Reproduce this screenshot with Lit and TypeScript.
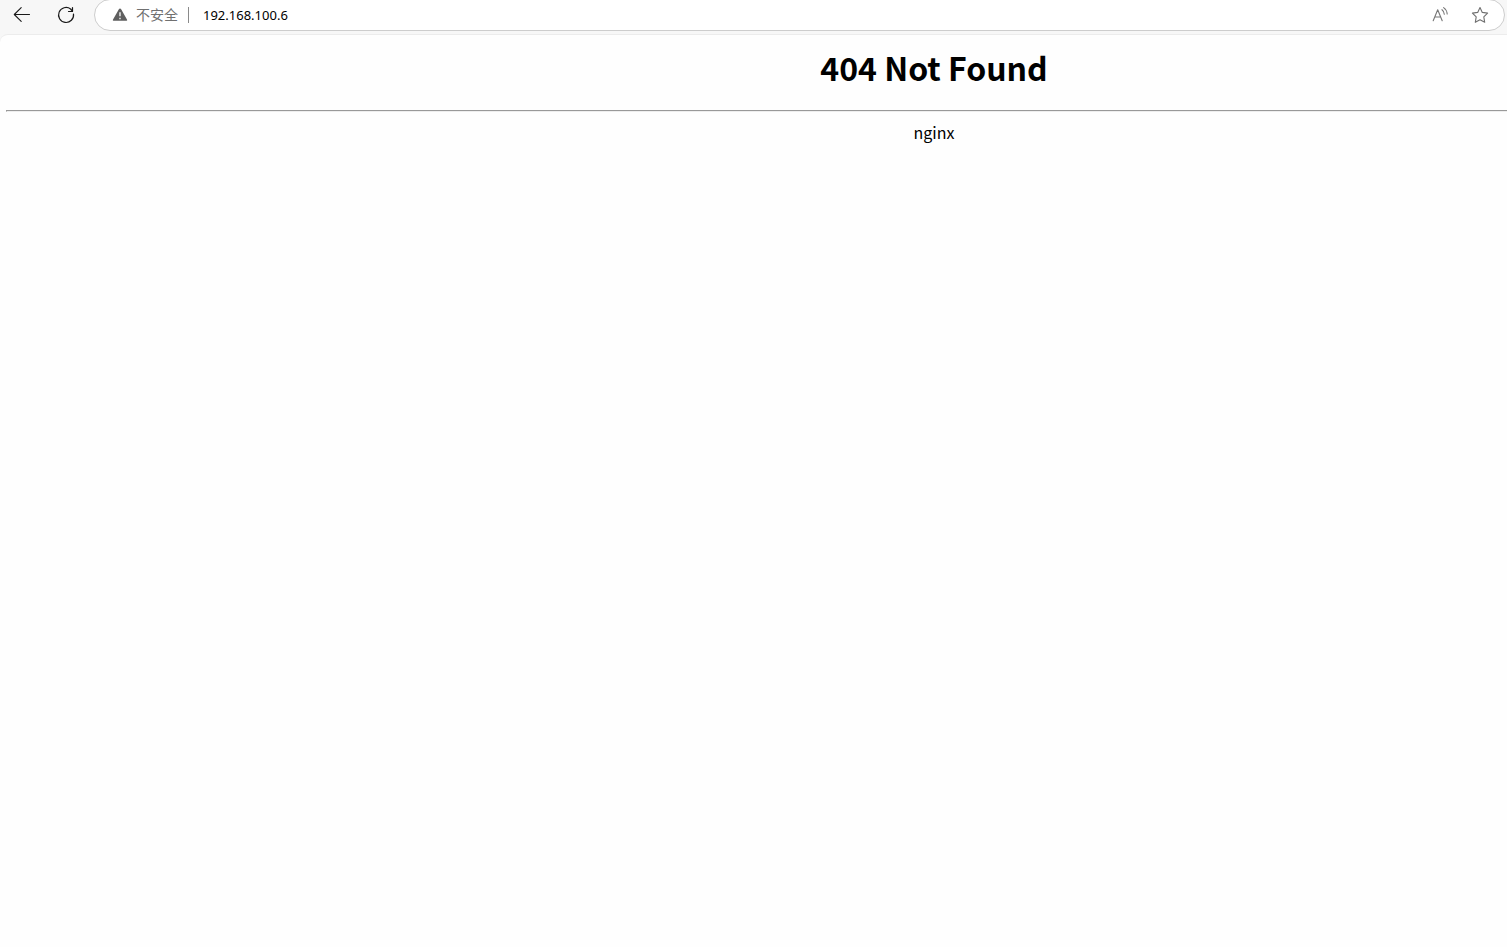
import { LitElement, html, css } from "lit";
import { customElement, property } from "lit/decorators.js";

@customElement("address-bar")
class AddressBar extends LitElement {
  @property() url = "";

  static styles = css`
    :host {
      flex: 1;
      min-width: 0;
    }
    .bar {
      display: flex;
      align-items: center;
      box-sizing: border-box;
      height: 32px;
      padding: 0 15px 0 17px;
      border: 1px solid #cdcdcd;
      border-radius: 16px;
      background: #ffffff;
      color: #666666;
    }
    button {
      display: flex;
      align-items: center;
      margin: 0;
      padding: 0;
      border: 0;
      background: none;
      color: inherit;
      font: 14px/20px "Noto Sans CJK SC", sans-serif;
    }
    .security {
      gap: 8px;
      padding-bottom: 2px;
      color: #707070;
    }
    .divider {
      width: 1px;
      height: 16px;
      margin: 0 14px 0 10px;
      background: #8a8a8a;
    }
    .url {
      flex: 1;
      min-width: 0;
      padding: 0;
      border: 0;
      outline: 0;
      background: none;
      color: #000000;
      font: 13px/20px "Noto Sans", sans-serif;
    }
    .actions {
      display: flex;
      gap: 22px;
    }
    svg {
      display: block;
    }
  `;

  render() {
    return html`
      <div class="bar">
        <button class="security">
          <svg width="16" height="16" viewBox="0 0 16 16" aria-hidden="true">
            <path d="M8 2.4 Q8.7 2.4 9 3 L15.1 13.8 Q15.5 14.8 14.5 14.8 H1.5 Q.5 14.8 .9 13.8 L7 3 Q7.3 2.4 8 2.4Z" fill="#5f5f5f" />
            <path d="M8 6.3V10.3M8 11.8V13.3" stroke="#fff" stroke-width="1.3" />
          </svg>
          不安全
        </button>
        <span class="divider"></span>
        <input class="url" aria-label="地址" .value=${this.url} />
        <div class="actions">
          <button aria-label="大声朗读">
            <svg width="18" height="18" viewBox="0 0 18 18" fill="none" stroke="#777777" stroke-width="1.1" stroke-linecap="round" stroke-linejoin="round">
              <path d="M2.2 14.8 6.7 3.8 11.2 14.8M3.8 11H9.6M11 3.7Q13.1 5.4 13.3 8.2M12.6 1.6Q15.9 3.8 16.2 8" />
            </svg>
          </button>
          <button aria-label="添加到收藏夹">
            <svg width="18" height="18" viewBox="0 0 18 18" fill="none" stroke="#707070" stroke-width="1.1" stroke-linejoin="round">
              <path d="M9 1.6 11.3 6.4 16.6 7.1 12.8 10.9 13.7 16.3 9 13.8 4.3 16.3 5.2 10.9 1.4 7.1 6.7 6.4Z" />
            </svg>
          </button>
        </div>
      </div>
    `;
  }
}

@customElement("app-root")
class AppRoot extends LitElement {
  static styles = css`
    :host {
      display: flex;
      flex-direction: column;
      min-height: 100vh;
      overflow: hidden;
      background: #f7f7f7;
      color: #000000;
      font: 16px/24px "Noto Sans CJK SC", sans-serif;
    }
    .toolbar {
      display: flex;
      align-items: center;
      margin-top: -1px;
      padding: 0 2px 3px 12px;
    }
    .nav {
      display: flex;
      gap: 24px;
      padding-right: 18px;
    }
    .nav button {
      padding: 0;
      margin: 0;
      border: 0;
      background: none;
    }
    svg {
      display: block;
    }
    .page {
      flex: 1;
      border-top: 1px solid #ececec;
      border-radius: 8px 0 0 0;
      background: #fefefe;
    }
    /* The document is wider than the viewport and runs off its right side. */
    .document {
      margin: 0 -355px 0 6px;
      padding-top: 8px;
      text-align: center;
    }
    h1 {
      margin: 0;
      font-size: 32px;
      line-height: 48px;
      font-weight: 700;
    }
    hr {
      margin: 19px 0 8px;
      border: 1px solid;
      border-color: #999999 #eeeeee #eeeeee #999999;
      height: 0;
    }
    p {
      margin: 0;
    }
  `;

  render() {
    return html`
      <header class="toolbar">
        <nav class="nav">
          <button aria-label="返回">
            <svg width="20" height="20" viewBox="0 0 20 20" fill="none" stroke="#1a1a1a" stroke-width="1.1" stroke-linecap="round" stroke-linejoin="round">
              <path d="M17.5 9.5H2.5M9.2 2.6 2.3 9.5 9.2 16.4" />
            </svg>
          </button>
          <button aria-label="刷新">
            <svg width="20" height="20" viewBox="0 0 20 20" fill="none" stroke="#1a1a1a" stroke-width="1.2" stroke-linecap="round" stroke-linejoin="round">
              <path d="M17.5 9A7.5 7.5 0 1 1 14.6 4L16.5 6.3M16.5 2.5V6.5H12.5" />
            </svg>
          </button>
        </nav>
        <address-bar url="192.168.100.6"></address-bar>
      </header>
      <main class="page">
        <div class="document">
          <h1>404 Not Found</h1>
          <hr />
          <p>nginx</p>
        </div>
      </main>
    `;
  }
}
